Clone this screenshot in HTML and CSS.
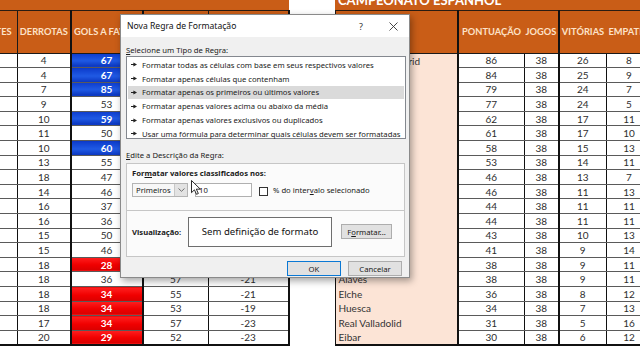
FILE: index.html
```html
<!DOCTYPE html>
<html lang="pt">
<head>
<meta charset="utf-8">
<title>Nova Regra de Formatação</title>
<link rel="stylesheet" href="styles.css">
</head>
<body>
<div class="sheet">
  <table class="tbl tbl-left">
    <colgroup><col class="w53"><col class="w53"><col class="w72"><col class="w66"><col class="w80"></colgroup>
    <tr class="r-title"><td colspan="5"></td></tr>
    <tr class="r-head"><th>EMPATES</th><th>DERROTAS</th><th class="thick">GOLS A FAVOR</th><th class="thick">GOLS CONTRA</th><th class="edge">SALDO DE GOLS</th></tr>
    <tr class="r-data"><td>8</td><td>4</td><td class="thick hi">67</td><td class="thick">25</td><td class="edge">42</td></tr>
    <tr class="r-data"><td>9</td><td>4</td><td class="thick hi">67</td><td class="thick">28</td><td class="edge">39</td></tr>
    <tr class="r-data"><td>7</td><td>7</td><td class="thick hi">85</td><td class="thick">38</td><td class="edge">47</td></tr>
    <tr class="r-data"><td>5</td><td>9</td><td class="thick">53</td><td class="thick">33</td><td class="edge">20</td></tr>
    <tr class="r-data"><td>11</td><td>10</td><td class="thick hi">59</td><td class="thick">38</td><td class="edge">21</td></tr>
    <tr class="r-data"><td>10</td><td>11</td><td class="thick">50</td><td class="thick">50</td><td class="edge">0</td></tr>
    <tr class="r-data"><td>13</td><td>10</td><td class="thick hi">60</td><td class="thick">44</td><td class="edge">16</td></tr>
    <tr class="r-data"><td>11</td><td>13</td><td class="thick">55</td><td class="thick">57</td><td class="edge">-2</td></tr>
    <tr class="r-data"><td>7</td><td>18</td><td class="thick">47</td><td class="thick">65</td><td class="edge">-18</td></tr>
    <tr class="r-data"><td>13</td><td>14</td><td class="thick">46</td><td class="thick">42</td><td class="edge">4</td></tr>
    <tr class="r-data"><td>11</td><td>16</td><td class="thick">37</td><td class="thick">48</td><td class="edge">-11</td></tr>
    <tr class="r-data"><td>11</td><td>16</td><td class="thick">36</td><td class="thick">58</td><td class="edge">-22</td></tr>
    <tr class="r-data"><td>13</td><td>15</td><td class="thick">50</td><td class="thick">53</td><td class="edge">-3</td></tr>
    <tr class="r-data"><td>14</td><td>15</td><td class="thick">46</td><td class="thick">57</td><td class="edge">-11</td></tr>
    <tr class="r-data"><td>11</td><td>18</td><td class="thick lo">28</td><td class="thick">43</td><td class="edge">-15</td></tr>
    <tr class="r-data"><td>11</td><td>18</td><td class="thick">36</td><td class="thick">57</td><td class="edge">-21</td></tr>
    <tr class="r-data"><td>12</td><td>18</td><td class="thick lo">34</td><td class="thick">55</td><td class="edge">-21</td></tr>
    <tr class="r-data"><td>13</td><td>18</td><td class="thick lo">34</td><td class="thick">53</td><td class="edge">-19</td></tr>
    <tr class="r-data"><td>16</td><td>17</td><td class="thick lo">34</td><td class="thick">57</td><td class="edge">-23</td></tr>
    <tr class="r-data last"><td>12</td><td>20</td><td class="thick lo">29</td><td class="thick">52</td><td class="edge">-23</td></tr>
  </table>

  <table class="tbl tbl-right">
    <colgroup><col class="w123"><col class="w66"><col class="w35"><col class="w47"><col class="w46"></colgroup>
    <tr class="r-title"><td colspan="5" class="title">CAMPEONATO ESPANHOL</td></tr>
    <tr class="r-head"><th class="name-h"></th><th class="thick open-r">PONTUAÇÃO</th><th class="open">JOGOS</th><th class="thick open-r">VITÓRIAS</th><th class="open">EMPATES</th></tr>
    <tr class="r-data"><td class="name">Atlético de Madrid</td><td class="thick">86</td><td>38</td><td class="thick">26</td><td>8</td></tr>
    <tr class="r-data"><td class="name">Real Madrid</td><td class="thick">84</td><td>38</td><td class="thick">25</td><td>9</td></tr>
    <tr class="r-data"><td class="name">Barcelona</td><td class="thick">79</td><td>38</td><td class="thick">24</td><td>7</td></tr>
    <tr class="r-data"><td class="name">Sevilla</td><td class="thick">77</td><td>38</td><td class="thick">24</td><td>5</td></tr>
    <tr class="r-data"><td class="name">Real Sociedad</td><td class="thick">62</td><td>38</td><td class="thick">17</td><td>11</td></tr>
    <tr class="r-data"><td class="name">Betis</td><td class="thick">61</td><td>38</td><td class="thick">17</td><td>10</td></tr>
    <tr class="r-data"><td class="name">Villarreal</td><td class="thick">58</td><td>38</td><td class="thick">15</td><td>13</td></tr>
    <tr class="r-data"><td class="name">Celta de Vigo</td><td class="thick">53</td><td>38</td><td class="thick">14</td><td>11</td></tr>
    <tr class="r-data"><td class="name">Granada</td><td class="thick">46</td><td>38</td><td class="thick">13</td><td>7</td></tr>
    <tr class="r-data"><td class="name">Athletic Bilbao</td><td class="thick">46</td><td>38</td><td class="thick">11</td><td>13</td></tr>
    <tr class="r-data"><td class="name">Osasuna</td><td class="thick">44</td><td>38</td><td class="thick">11</td><td>11</td></tr>
    <tr class="r-data"><td class="name">Cádiz</td><td class="thick">44</td><td>38</td><td class="thick">11</td><td>11</td></tr>
    <tr class="r-data"><td class="name">Valencia</td><td class="thick">43</td><td>38</td><td class="thick">10</td><td>13</td></tr>
    <tr class="r-data"><td class="name">Levante</td><td class="thick">41</td><td>38</td><td class="thick">9</td><td>14</td></tr>
    <tr class="r-data"><td class="name">Getafe</td><td class="thick">38</td><td>38</td><td class="thick">9</td><td>11</td></tr>
    <tr class="r-data"><td class="name">Alaves</td><td class="thick">38</td><td>38</td><td class="thick">9</td><td>11</td></tr>
    <tr class="r-data"><td class="name">Elche</td><td class="thick">36</td><td>38</td><td class="thick">8</td><td>12</td></tr>
    <tr class="r-data"><td class="name">Huesca</td><td class="thick">34</td><td>38</td><td class="thick">7</td><td>13</td></tr>
    <tr class="r-data"><td class="name">Real Valladolid</td><td class="thick">31</td><td>38</td><td class="thick">5</td><td>16</td></tr>
    <tr class="r-data last"><td class="name">Eibar</td><td class="thick">30</td><td>38</td><td class="thick">6</td><td>12</td></tr>
  </table>
</div>

<div class="dialog">
  <div class="dlg-title">
    <span class="dlg-caption">Nova Regra de Formatação</span>
    <span class="dlg-help">?</span>
    <svg class="dlg-close" width="9" height="9" viewBox="0 0 9 9"><path d="M0.5 0.5L8.5 8.5M8.5 0.5L0.5 8.5" stroke="#333" stroke-width="0.9" fill="none"/></svg>
  </div>
  <div class="dlg-body">
    <div class="lbl"><u>S</u>elecione um Tipo de Regra:</div>
    <div class="listbox">
      <div class="item"><svg class="arr" width="6" height="5" viewBox="0 0 6 5"><path d="M0 2.5H3" stroke="#222" stroke-width="1"/><path d="M2.4 0.6L6 2.5L2.4 4.4Z" fill="#222"/></svg>Formatar todas as células com base em seus respectivos valores</div>
      <div class="item"><svg class="arr" width="6" height="5" viewBox="0 0 6 5"><path d="M0 2.5H3" stroke="#222" stroke-width="1"/><path d="M2.4 0.6L6 2.5L2.4 4.4Z" fill="#222"/></svg>Formatar apenas células que contenham</div>
      <div class="item sel"><svg class="arr" width="6" height="5" viewBox="0 0 6 5"><path d="M0 2.5H3" stroke="#222" stroke-width="1"/><path d="M2.4 0.6L6 2.5L2.4 4.4Z" fill="#222"/></svg>Formatar apenas os primeiros ou últimos valores</div>
      <div class="item"><svg class="arr" width="6" height="5" viewBox="0 0 6 5"><path d="M0 2.5H3" stroke="#222" stroke-width="1"/><path d="M2.4 0.6L6 2.5L2.4 4.4Z" fill="#222"/></svg>Formatar apenas valores acima ou abaixo da média</div>
      <div class="item"><svg class="arr" width="6" height="5" viewBox="0 0 6 5"><path d="M0 2.5H3" stroke="#222" stroke-width="1"/><path d="M2.4 0.6L6 2.5L2.4 4.4Z" fill="#222"/></svg>Formatar apenas valores exclusivos ou duplicados</div>
      <div class="item"><svg class="arr" width="6" height="5" viewBox="0 0 6 5"><path d="M0 2.5H3" stroke="#222" stroke-width="1"/><path d="M2.4 0.6L6 2.5L2.4 4.4Z" fill="#222"/></svg>Usar uma fórmula para determinar quais células devem ser formatadas</div>
    </div>
    <div class="lbl lbl2"><u>E</u>dite a Descrição da Regra:</div>
    <div class="panel">
      <div class="sec1">
        <div class="bold">For<u>m</u>atar valores classificados nos:</div>
        <div class="crit">
          <div class="combo"><span class="combo-txt">Primeiros</span><span class="combo-btn"><svg width="7" height="4" viewBox="0 0 7 4"><path d="M0.5 0.5L3.5 3.3L6.5 0.5" stroke="#555" stroke-width="0.8" fill="none"/></svg></span></div>
          <div class="num">10</div>
          <span class="chk"></span>
          <span class="chk-lbl">% do inter<u>v</u>alo selecionado</span>
        </div>
      </div>
      <div class="sec2">
        <span class="bold prev-lbl">Visualização:</span>
        <div class="preview">Sem definição de formato</div>
        <div class="btn btn-fmt">F<u>o</u>rmatar...</div>
      </div>
    </div>
    <div class="btns">
      <div class="btn btn-ok">OK</div>
      <div class="btn">Cancelar</div>
    </div>
  </div>
</div>

<svg class="cursor" width="10" height="15" viewBox="0 0 12 18"><path d="M0.6 0.6V15.2L4.1 11.8L6.6 17.2L8.8 16.2L6.4 11H11.2Z" fill="#fff" stroke="#000" stroke-width="1"/></svg>
</body>
</html>
```

FILE: styles.css
```css
* { box-sizing: border-box; }
html, body { margin: 0; padding: 0; }
body {
  width: 640px;
  height: 360px;
  overflow: hidden;
  background: #fff;
  position: relative;
  font-family: Lato, "Liberation Sans", sans-serif;
}

/* spreadsheet */
.sheet {
  display: flex;
  gap: 45px;
  margin-left: -36px;
  margin-top: -14px;
}
.tbl {
  flex: none;
  border-collapse: collapse;
  table-layout: fixed;
  font-size: 10px;
  color: #2e2e2e;
}
.tbl-left { width: 324px; }
.tbl-right { width: 317px; }
.w53 { width: 53px; }
.w72 { width: 72px; }
.w66 { width: 66px; }
.w80 { width: 80px; }
.w123 { width: 123px; }
.w35 { width: 35px; }
.w47 { width: 47px; }
.w46 { width: 46px; }

.tbl td, .tbl th {
  padding: 0;
  text-align: center;
  white-space: nowrap;
  overflow: visible;
}
.r-title td {
  height: 24px;
  background: #c95d17;
  border-bottom: 1px solid #2a1c12;
}
.r-title .title {
  color: #fff;
  font-weight: 700;
  font-size: 13px;
  line-height: 13px;
  text-align: left;
  vertical-align: bottom;
  padding: 0 0 3px 3px;
}
.r-head th {
  height: 43px;
  background: #c95d17;
  color: #fde2c8;
  font-weight: 700;
  font-size: 9.3px;
  border: 1px solid #1a1a1a;
}
.r-head .open-r { border-right: none; }
.r-head .open { border-left: none; border-right: none; }
.r-data td {
  height: 14.6px;
  line-height: 12px;
  border-top: 1px solid #5a5a5a;
  border-bottom: 1px solid #5a5a5a;
  border-left: 1px solid #111;
  border-right: 1px solid #111;
}
.r-head .thick, .r-data .thick { border-left: 2px solid #111; }
.r-head .edge, .r-data .edge { border-right: 2px solid #111; }
.r-data.last td { border-bottom: 2px solid #111; }

.hi {
  background: linear-gradient(#0d3ccc, #1f5ae4 55%, #0a34bd);
  color: #fff;
  font-weight: 700;
}
.lo {
  background: linear-gradient(#ff2020, #f00000 55%, #d80000);
  color: #fff;
  font-weight: 700;
}

.name-h { border-right: 2px solid #111 !important; }
.r-data .name {
  background: #fce4d6;
  text-align: left;
  padding-left: 3px;
  font-size: 10px;
  color: #333;
  border-top: none;
  border-bottom: none;
  border-left: 1px solid #111;
  border-right: 2px solid #111;
}
.r-data.last .name { border-bottom: 2px solid #111; }

/* dialog */
.dialog {
  position: absolute;
  left: 120px;
  top: 14px;
  width: 290px;
  height: 264px;
  background: #f0f0f0;
  border: 1px solid #8a8a8a;
  box-shadow: 2px 3px 7px rgba(0, 0, 0, 0.35);
  font-family: "Noto Sans", "Open Sans", sans-serif;
  font-size: 7.7px;
  color: #1a1a1a;
  display: flex;
  flex-direction: column;
}
.dlg-title {
  height: 22px;
  background: #fff;
  display: flex;
  align-items: center;
  padding: 0 9px 0 6px;
  font-size: 8.6px;
  color: #111;
}
.dlg-caption { flex: 1; }
.dlg-help {
  width: 10px;
  text-align: center;
  font-size: 9px;
  margin-right: 23px;
  color: #333;
}
.dlg-close { display: block; margin-right: 2px; }

.dlg-body {
  flex: 1;
  display: flex;
  flex-direction: column;
  padding: 8px 3px 0 5px;
}
.lbl { line-height: 10px; height: 10px; }
.lbl2 { margin-top: 11px; }
.listbox {
  margin-top: 1px;
  height: 83px;
  background: #fff;
  border: 1px solid #84888f;
  padding: 1px;
}
.item {
  height: 13.8px;
  display: flex;
  align-items: center;
  gap: 5px;
  padding-left: 3px;
  white-space: nowrap;
}
.item.sel { background: #dadada; }
.arr { display: block; flex: none; }

.panel {
  margin-top: 3px;
  margin-right: 1px;
  height: 94px;
  border: 1px solid #c6c6c6;
  background: #fbfbfb;
  display: flex;
  flex-direction: column;
}
.bold { font-weight: 700; }
.sec1 {
  height: 47px;
  padding: 4px 5px 0;
  border-bottom: 1px solid #c6c6c6;
}
.sec1 .bold { line-height: 10px; }
.crit {
  margin-top: 5px;
  height: 14px;
  display: flex;
  align-items: center;
}
.combo {
  width: 56px;
  height: 14px;
  border: 1px solid #b4b4b4;
  background: #f7f7f7;
  display: flex;
}
.combo-txt { flex: 1; padding-left: 3px; line-height: 12px; }
.combo-btn {
  width: 13px;
  border-left: 1px solid #c8c8c8;
  background: #e3e3e3;
  display: flex;
  align-items: center;
  justify-content: center;
}
.combo-btn svg { display: block; }
.num {
  margin-left: 7px;
  width: 57px;
  height: 14px;
  border: 1px solid #b0b0b0;
  background: #fff;
  padding-left: 3px;
  line-height: 12px;
}
.chk {
  margin-left: 7px;
  width: 9px;
  height: 9px;
  border: 1px solid #333;
  background: #fff;
  margin-top: 2px;
}
.chk-lbl { margin-left: 5px; }

.sec2 {
  flex: 1;
  display: flex;
  align-items: center;
  padding: 0 0 4px 5px;
}
.prev-lbl { width: 56px; }
.preview {
  width: 144px;
  height: 30px;
  background: #fff;
  border: 1px solid #6e6e6e;
  display: flex;
  align-items: center;
  justify-content: center;
  font-size: 9.6px;
  color: #111;
}
.btn {
  width: 54px;
  height: 15px;
  background: #e1e1e1;
  border: 1px solid #adadad;
  display: flex;
  align-items: center;
  justify-content: center;
  color: #1a1a1a;
}
.btn-fmt { margin-left: 9px; width: 51px; }
.btns {
  margin-top: 4px;
  display: flex;
  justify-content: flex-end;
  gap: 7px;
  padding-right: 4px;
}
.btn-ok { border: 1.5px solid #0a78d4; }

.cursor {
  position: absolute;
  left: 191px;
  top: 180px;
}
```
